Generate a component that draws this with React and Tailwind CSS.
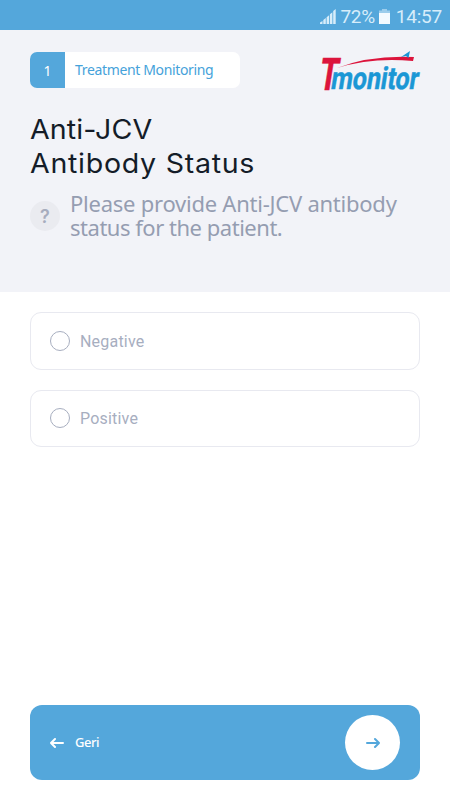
import { useState } from "react";

const options = [
  { id: "negative", label: "Negative" },
  { id: "positive", label: "Positive" },
];

function StatusBar() {
  return (
    <div className="flex h-[30px] items-center justify-end bg-[#54a7db] pr-2 pt-0.5 font-['Roboto',sans-serif] text-[19px] leading-none text-[#d7edfa]">
      <svg className="mr-[5px] h-[15px] w-[16px]" viewBox="0 0 16 15" fill="currentColor">
        <path d="M0 15v-1.500l2.500-1.500v3zM3.300 15v-4l2.500-2V15zM6.600 15V8.200l2.500-2V15zM9.900 15V5.200l2.500-2V15zM13.200 15V2L15.700 0v15z" />
      </svg>
      <span className="tracking-[-0.4px]">72%</span>
      <svg className="ml-[4px] mr-[6px] h-[15px] w-[11px]" viewBox="0 0 11 15">
        <path d="M3 0h5v1.500h3V4H0V1.500h3z" fill="#9ccdec" />
        <path d="M0 4h11v11H0z" fill="#f3faff" />
      </svg>
      <span className="tracking-[-0.2px]">14:57</span>
    </div>
  );
}

function Logo() {
  return (
    <svg className="h-[42px] w-[100px] overflow-visible" viewBox="0 0 100 42" role="img" aria-label="Tmonitor">
      <g fontFamily="Roboto, sans-serif" fontWeight="700">
        <g transform="translate(-1.500 39.500) skewX(-9)" fill="#dc143c" stroke="#dc143c" strokeWidth="0.600">
          <text x="-1" y="0" fontSize="45" textLength="19" lengthAdjust="spacingAndGlyphs">
            T
          </text>
        </g>
        <g transform="translate(10 39.300) skewX(-9)" fill="#1b97d5" stroke="#1b97d5" strokeWidth="0.500">
          <text x="0" y="0" fontSize="31" textLength="87.500" lengthAdjust="spacingAndGlyphs">
            monitor
          </text>
        </g>
      </g>
      <path d="M17 18Q50 5 94 7L93 11Q52 7 17 18z" fill="#dc143c" />
      <path d="M81 7L90 1l-1.500 7-2.500-2z" fill="#1b97d5" />
    </svg>
  );
}

function Arrow({ className }) {
  return (
    <svg className={className} viewBox="0 0 14 12" fill="none" stroke="currentColor" strokeWidth="2" strokeLinecap="round" strokeLinejoin="round">
      <path d="M1 6h12M9 2L13 6l-4 4" />
    </svg>
  );
}

function App() {
  const [selected, setSelected] = useState(null);

  return (
    <div className="flex h-[800px] w-[450px] flex-col bg-white">
      <StatusBar />

      <header className="h-[262px] bg-[#f2f3f8] px-[30px] pt-5">
        <div className="flex h-[42px] items-start justify-between">
          <div className="mt-[2px] flex h-[36px] w-[210px] overflow-hidden rounded-[7px] bg-white pb-px font-['Noto_Sans',sans-serif] text-[14px] text-[#45a2da]">
            <span className="-mb-px flex w-[35px] items-center justify-center bg-[#54a7db] text-white">1</span>
            <span className="flex items-center pl-[10px] tracking-[-0.35px]">Treatment Monitoring</span>
          </div>
          <Logo />
        </div>

        <h1 className="mt-[21px] origin-left scale-x-[1.06] font-['Inter',sans-serif] text-[27px] leading-[34px] text-[#141c28]">
          <span className="block tracking-[0.05px]">Anti-JCV</span>
          <span className="block tracking-[0.65px]">Antibody Status</span>
        </h1>

        <div className="mt-[10px] flex items-center gap-[10px]">
          <span className="flex h-[30px] w-[30px] shrink-0 items-center justify-center rounded-full bg-[#eaebf0] font-['Inter',sans-serif] text-[18px] font-semibold text-[#a7adbe]">
            ?
          </span>
          <p className="whitespace-nowrap pb-[2px] font-['Noto_Sans',sans-serif] text-[22px] leading-6 text-[#959db1]">
            <span className="block tracking-[-0.24px]">Please provide Anti-JCV antibody</span>
            <span className="block tracking-[-0.48px]">status for the patient.</span>
          </p>
        </div>
      </header>

      <main className="flex flex-1 flex-col gap-5 px-[30px] pt-5">
        {options.map((option) => (
          <button
            key={option.id}
            type="button"
            onClick={() => setSelected(option.id)}
            className="flex h-[57.5px] items-center gap-[10px] rounded-[11px] border border-[#e8e9f0] pl-[19px] font-['Roboto',sans-serif] text-[16px] text-[#a7aebf]"
          >
            <span
              className={`h-5 w-5 rounded-full border border-[#a7aebf] ${selected === option.id ? "bg-[#54a7db]" : ""}`}
            />
            <span className="pt-[2px] tracking-[0.2px]">{option.label}</span>
          </button>
        ))}
      </main>

      <footer className="mx-[30px] mb-5 flex h-[75px] items-center justify-between rounded-[12px] bg-[#54a7db] px-5 text-white">
        <button type="button" className="flex items-center gap-[11px] font-['Noto_Sans',sans-serif] text-[13px] font-medium tracking-[-0.5px]">
          <Arrow className="h-3 w-[14px] rotate-180" />
          Geri
        </button>
        <button type="button" className="flex h-[55px] w-[55px] items-center justify-center rounded-full bg-white text-[#54a7db]">
          <Arrow className="h-3 w-[14px]" />
        </button>
      </footer>
    </div>
  );
}

export default App;
